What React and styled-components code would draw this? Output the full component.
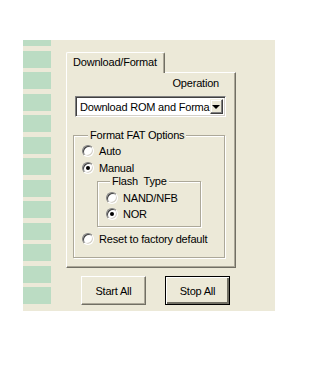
import styled, { createGlobalStyle } from 'styled-components';

const GlobalStyle = createGlobalStyle`
    body {
        margin: 0;
        background: #fff;
        font-family: "Liberation Sans", Arial, sans-serif;
        font-size: 11px;
        letter-spacing: -0.2px;
        color: #000;
    }
`;

const blocks = Array.from({ length: 12 });

export default function App() {
    return (
        <>
            <GlobalStyle />
            <Panel>
                <Column>
                    <Block $h={6} />
                    {blocks.map((_, i) => <Block key={i} $h={17} />)}
                </Column>

                <Content>
                    <TabStrip>
                        <Tab>Download/Format</Tab>
                    </TabStrip>

                    <Page>
                        <Label>Operation</Label>
                        <Select>
                            <SelectText>Download ROM and Forma</SelectText>
                            <DropButton><Arrow /></DropButton>
                        </Select>

                        <Group $w={152} $ml={-2} $mt={12} $h={129} $pt={0}>
                            <Legend $ml={6}>Format FAT Options</Legend>
                            <Radio label="Auto" />
                            <Radio label="Manual" checked />
                            <Group $w={104} $ml={15} $mt={-1} $h={52} $pt={2}>
                                <Legend $ml={4}>Flash&nbsp;&nbsp;Type</Legend>
                                <Radio label="NAND/NFB" $pitch={16} />
                                <Radio label="NOR" checked $pitch={16} />
                            </Group>
                            <Radio label="Reset to factory default" $mt={3} />
                        </Group>
                    </Page>

                    <Buttons>
                        <Button>Start All</Button>
                        <Button $default>Stop All</Button>
                    </Buttons>
                </Content>
            </Panel>
        </>
    );
}

function Radio({ label, checked, $pitch, $mt }) {
    return (
        <RadioRow $pitch={$pitch} $mt={$mt}>
            <RadioCircle>{checked && <Dot />}</RadioCircle>
            <span>{label}</span>
        </RadioRow>
    );
}

const Panel = styled.div`
    margin: 40px 0 0 23px;
    width: 252px;
    height: 271px;
    background: #ece9d8;
    display: flex;
`;

const Column = styled.div`
    width: 28px;
    display: flex;
    flex-direction: column;
    overflow: hidden;
`;

const Block = styled.div`
    flex: none;
    height: ${p => p.$h}px;
    background: #bbdcc3;
    margin-bottom: 4px;
    &:nth-child(odd) { margin-bottom: 5px; }
`;

const Content = styled.div`
    padding: 12px 0 0 15px;
    display: flex;
    flex-direction: column;
`;

const TabStrip = styled.div`
    display: flex;
    height: 20px;
`;

const Tab = styled.div`
    width: 99px;
    box-sizing: border-box;
    padding: 3px 0 0 6px;
    border-top: 1px solid #fff;
    border-left: 1px solid #fff;
    border-right: 1px solid #716f64;
    border-top-left-radius: 2px;
    border-top-right-radius: 2px;
    box-shadow: inset -1px 0 #aca899;
    margin-bottom: -1px;
    position: relative;
    z-index: 1;
    background: #ece9d8;
`;

const Page = styled.div`
    width: 170px;
    height: 196px;
    box-sizing: border-box;
    border-top: 1px solid #fff;
    border-left: 1px solid #fff;
    border-right: 1px solid #716f64;
    border-bottom: 1px solid #716f64;
    box-shadow: inset -1px -1px #aca899;
    display: flex;
    flex-direction: column;
    padding: 4px 0 0 8px;
`;

const Label = styled.div`
    align-self: flex-end;
    margin-right: 16px;
    height: 13px;
`;

const Select = styled.div`
    margin-top: 6px;
    width: 151px;
    height: 21px;
    box-sizing: border-box;
    background: #fff;
    border: 1px solid;
    border-color: #808080 #fff #fff #808080;
    box-shadow: inset 1px 1px #404040, inset -1px -1px #d4d0c8;
    display: flex;
    align-items: center;
    padding: 2px;
`;

const SelectText = styled.div`
    flex: 1;
    white-space: nowrap;
    padding-left: 2px;
`;

const DropButton = styled.div`
    width: 16px;
    height: 15px;
    box-sizing: border-box;
    background: #ece9d8;
    border: 1px solid;
    border-color: #f1efe2 #404040 #404040 #f1efe2;
    box-shadow: inset -1px -1px #808080, inset 1px 1px #fff;
    display: flex;
    align-items: center;
    justify-content: center;
`;

const Arrow = styled.div`
    width: 0;
    height: 0;
    border-left: 4px solid transparent;
    border-right: 4px solid transparent;
    border-top: 4px solid #000;
`;

const Group = styled.fieldset`
    margin: ${p => p.$mt}px 0 0 ${p => p.$ml}px;
    width: ${p => p.$w}px;
    height: ${p => p.$h}px;
    box-sizing: border-box;
    padding: ${p => p.$pt}px 0 0 8px;
    border: 1px solid #aca899;
    box-shadow: inset 1px 1px #fff, 1px 1px #fff;
    display: flex;
    flex-direction: column;
`;

const Legend = styled.legend`
    padding: 0 2px;
    margin-left: ${p => p.$ml}px;
    background: #ece9d8;
    line-height: 13px;
`;

const RadioRow = styled.div`
    display: flex;
    align-items: center;
    gap: 5px;
    height: ${p => p.$pitch || 17}px;
    margin-top: ${p => p.$mt || 0}px;
`;

const RadioCircle = styled.div`
    width: 12px;
    height: 12px;
    box-sizing: border-box;
    border-radius: 50%;
    border: 1px solid;
    border-color: #808080 #fff #fff #808080;
    box-shadow: inset 1px 1px #404040, inset -1px -1px #d4d0c8;
    background: #fff;
    display: flex;
    align-items: center;
    justify-content: center;
`;

const Dot = styled.div`
    width: 4px;
    height: 4px;
    border-radius: 50%;
    background: #000;
`;

const Buttons = styled.div`
    display: flex;
    gap: 19px;
    margin: 8px 0 0 15px;
`;

const Button = styled.div`
    width: 65px;
    height: 29px;
    box-sizing: border-box;
    display: flex;
    align-items: center;
    justify-content: center;
    background: #ece9d8;
    border: 1px solid;
    border-color: ${p => p.$default ? '#000' : '#fff #716f64 #716f64 #fff'};
    box-shadow: ${p => p.$default
        ? 'inset 1px 1px #fff, inset -2px -2px #716f64'
        : 'inset -1px -1px #aca899'};
`;
